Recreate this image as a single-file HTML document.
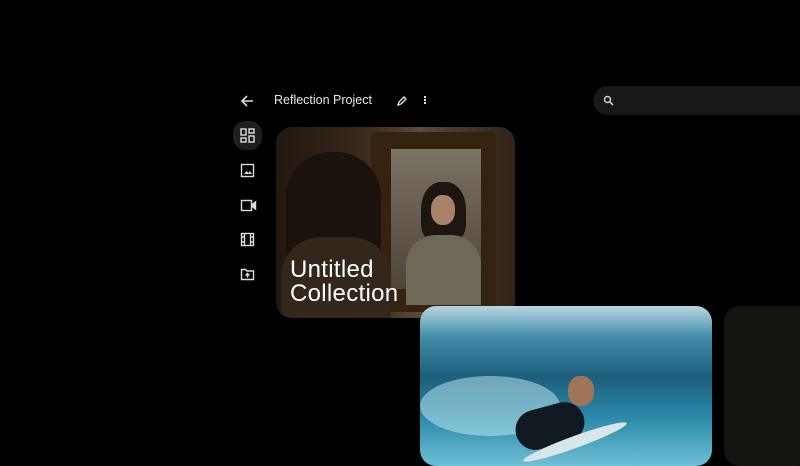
<!DOCTYPE html>
<html><head><style>
body{margin:0;width:800px;height:448px;background:#000;overflow:hidden;position:relative;font-family:"Liberation Sans",sans-serif}
.a{position:absolute}
svg{position:absolute}
</style></head><body>
<svg style="left:239px;top:93px" width="16" height="16" viewBox="0 0 16 16"><path d="M14 8H3M8 3L3 8l5 5" stroke="#ddd" stroke-width="1.6" fill="none"/></svg>
<div class="a" style="left:274px;top:93px;color:#e8e8e8;font-size:12.5px">Reflection Project</div>
<svg style="left:396px;top:95px" width="12" height="12" viewBox="0 0 12 12"><path d="M2 10l1-3 5-5 2 2-5 5z" stroke="#ddd" stroke-width="1.4" fill="none"/></svg>
<div class="a" style="left:424px;top:96px;width:2px;height:2px;background:#ddd;box-shadow:0 3px #ddd,0 6px #ddd"></div>
<div class="a" style="left:593px;top:86px;width:220px;height:29px;border-radius:15px;background:#181818"></div>
<svg style="left:603px;top:95px" width="11" height="11" viewBox="0 0 11 11"><circle cx="4.5" cy="4.5" r="3" stroke="#ccc" stroke-width="1.5" fill="none"/><path d="M7 7l3 3" stroke="#ccc" stroke-width="1.6"/></svg>
<div class="a" style="left:233px;top:121px;width:29px;height:29px;border-radius:12px;background:#1e1e1e"></div>
<svg style="left:240px;top:128px" width="15" height="15" viewBox="0 0 15 15" fill="none" stroke="#ddd" stroke-width="1.4"><rect x="1" y="1" width="5" height="6"/><rect x="9" y="1" width="5" height="4"/><rect x="1" y="10" width="5" height="4"/><rect x="9" y="8" width="5" height="6"/></svg>
<svg style="left:240px;top:163px" width="15" height="15" viewBox="0 0 15 15" fill="none" stroke="#ddd" stroke-width="1.4"><rect x="1.5" y="1.5" width="12" height="12"/><path d="M4 11l2.5-3 2 2 1.5-2 2 3z" fill="#ddd" stroke="none"/></svg>
<svg style="left:240px;top:198px" width="17" height="15" viewBox="0 0 17 15" fill="none" stroke="#ddd" stroke-width="1.4"><rect x="1.5" y="2.5" width="10" height="10"/><path d="M11.5 7l4-3v7l-4-3" fill="#ddd"/></svg>
<svg style="left:240px;top:232px" width="15" height="15" viewBox="0 0 15 15" fill="none" stroke="#ddd" stroke-width="1.4"><rect x="1.5" y="1.5" width="12" height="12"/><path d="M4.5 1.5v12M10.5 1.5v12M1.5 5h3M1.5 10h3M10.5 5h3M10.5 10h3"/></svg>
<svg style="left:240px;top:267px" width="15" height="14" viewBox="0 0 15 14" fill="none" stroke="#ddd" stroke-width="1.4"><path d="M1.5 2.5h4l1.5 1.5h6.5v8.5h-12z"/><path d="M7.5 10.5v-4M5.5 8.5l2-2 2 2"/></svg>
<div class="a" style="left:276px;top:127px;width:239px;height:191px;border-radius:16px;overflow:hidden;background:linear-gradient(90deg,#22180f 0%,#33251a 30%,#463322 45%,#5a4a3a 60%,#4a3a2a 75%,#30231a 100%)">
<div class="a" style="left:95px;top:5px;width:125px;height:180px;background:#35230f;border-radius:4px"></div>
<div class="a" style="left:115px;top:22px;width:90px;height:140px;background:linear-gradient(#7a7264,#4e4538)"></div>
<div class="a" style="left:145px;top:55px;width:45px;height:60px;border-radius:45% 45% 30% 30%;background:#1c1510"></div>
<div class="a" style="left:155px;top:68px;width:24px;height:30px;border-radius:45%;background:#a8836a"></div>
<div class="a" style="left:130px;top:108px;width:75px;height:70px;border-radius:30px 30px 0 0;background:#6e6856"></div>
<div class="a" style="left:10px;top:25px;width:95px;height:175px;border-radius:45px 45px 0 0;background:#1a120c"></div>
<div class="a" style="left:5px;top:110px;width:110px;height:100px;border-radius:40px 40px 0 0;background:#33261a"></div>
<div class="a" style="left:14px;top:131px;color:#fff;font-size:24px;line-height:24px;letter-spacing:0.3px">Untitled<br>Collection</div>
</div>
<div class="a" style="left:420px;top:306px;width:292px;height:160px;border-radius:16px;overflow:hidden;background:linear-gradient(180deg,#b8d6e0 0%,#3f8aa6 20%,#1d5f7d 45%,#2a8aa8 70%,#6fc0d4 100%)">
<div class="a" style="left:0;top:70px;width:140px;height:60px;border-radius:50%;background:rgba(200,235,245,.5)"></div>
<div class="a" style="left:95px;top:100px;width:70px;height:40px;border-radius:20px;background:#101820;transform:rotate(-15deg)"></div>
<div class="a" style="left:148px;top:70px;width:26px;height:30px;border-radius:45%;background:#a07458"></div>
<div class="a" style="left:100px;top:130px;width:110px;height:12px;border-radius:50%;background:#d8e6ea;transform:rotate(-20deg)"></div>
</div>
<div class="a" style="left:724px;top:306px;width:90px;height:160px;border-radius:16px;background:#141411"></div>
</body></html>
